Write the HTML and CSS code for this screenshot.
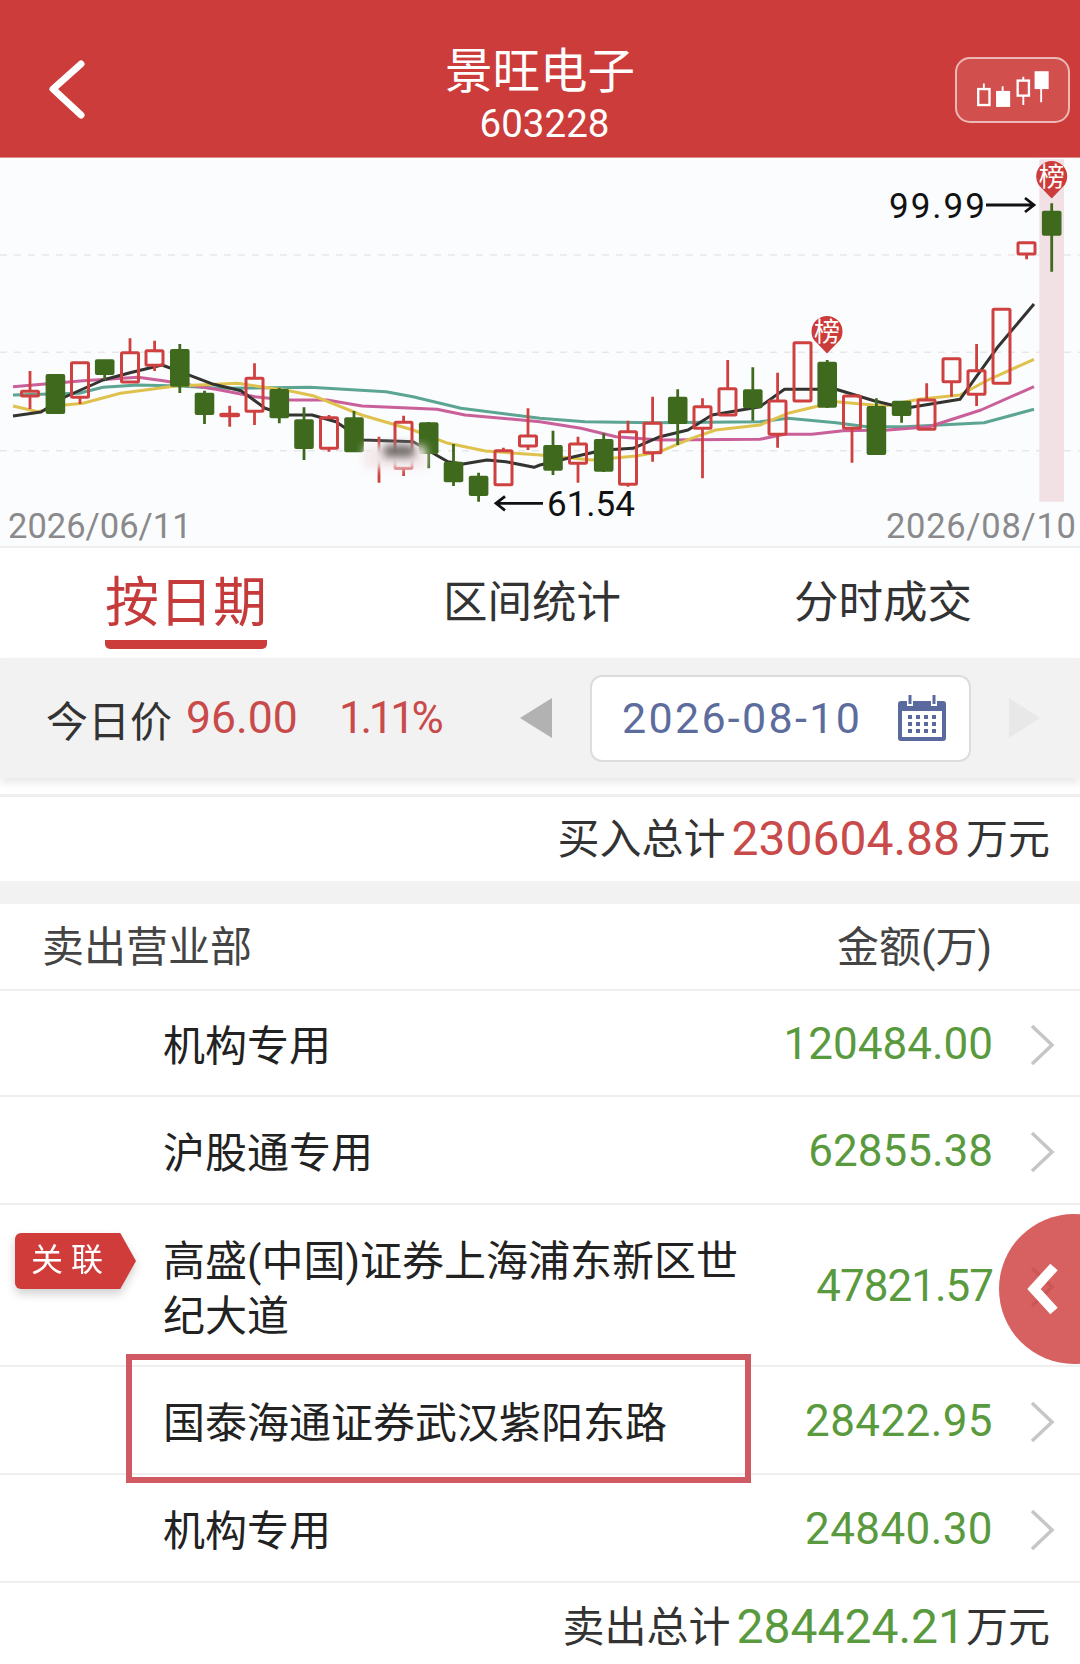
FILE: index.html
```html
<!DOCTYPE html>
<html lang="zh-CN">
<head>
    <meta charset="utf-8">
    <meta name="viewport" content="width=device-width, initial-scale=1.0">
    <title>景旺电子 603228</title>
    <link rel="stylesheet" href="styles.css">
</head>
<body>
    <div class="page">
        <header class="topbar">
            <svg class="back-icon" viewBox="0 0 40 60"><path d="M34 4 L6 29 L34 55"/></svg>
            <div class="title-block">
                <div class="title">景旺电子</div>
                <div class="code">603228</div>
            </div>
            <div class="kline-btn">
                <svg viewBox="0 0 115 66">
                    <path class="k-line" d="M27 26V31M47 29V34M69 19V23M69 39V49M88 32V46"/>
                    <rect class="k-open" x="21" y="32" width="12" height="17"/>
                    <rect class="k-fill" x="40" y="34" width="15" height="17"/>
                    <rect class="k-open" x="63" y="23" width="12" height="16"/>
                    <rect class="k-fill" x="81" y="13" width="15" height="19"/>
                </svg>
            </div>
        </header>

        <svg class="chart" viewBox="0 158 1080 388">
            <path class="grid" d="M0 255H1080M0 352.3H1080M0 450.7H1080"/>
            <rect class="today-band" x="1039.3" y="159.3" width="24.7" height="342.4"/>

            <polyline class="ma ma-teal" points="13,395 79,393.3 103,387.3 138,385 179,386 220,388.3 310,387.3 386,391.7 413,396.7 461,408.3 540,418.3 585,421.7 654,422.7 760,421.7 788,418.3 836,422.7 867,426.7 905,426.7 984,422.7 1034,409.3"/>
            <polyline class="ma ma-pink" points="13,386.7 83,380.7 138,377.3 165,381 220,390 255,396.7 286,400 327,400 362,406 437,409.3 465,415 540,421.7 581,428.3 616,436.7 660,440 760,439.3 784.5,434.3 812,434.3 843,430.7 888,430 929,426.7 981,410 1034,386.7"/>
            <polyline class="ma ma-yellow" points="13,406 38,411.7 65,405 83,403.3 120.5,393.3 175.6,386 237.6,383.3 289,390.7 313,395.7 361.6,415 413,430 448,443.3 485.5,451 540,455 592,460 636,456 660,451.7 691.5,438.3 715.6,430 760,425 788,413.3 836,401.7 884,406 919,399.3 960,395 988,380 1034,359.3"/>
            <polyline class="ma ma-black" points="13,416 41,412 65,397 103,380 130,372.7 162,365 180,371.7 213.5,384.3 241,390.7 265,408.3 286,415 312,415 336,421.7 363,440 413,441.7 448,461.7 463,464 487,460 506,461.7 534,467.3 540,465 574,456.7 604,450 633,448.3 660,436.7 688,430 712,415 760,406.7 784.5,389.3 836,389.3 874,400.7 905,408.3 960,399.3 998,346.7 1034,304"/>

            <!-- falling days -->
            <path class="wick-down" d="M104.7 375V380M179.8 344V393M204.5 390.7V424M279.3 388V423.3M304 407.3V460M354 411V452M428.7 422V468.3M453.5 444V486M478.6 472.7V501.7M553 430.7V475M603.7 433.3V472M677.7 389.3V445M752.8 367.3V420.7M827.2 360V408M876.4 398.3V455M901.6 416V422.7M1051.7 203.3V271.7"/>
            <g class="body-down">
                <rect x="45.6" y="374" width="19.6" height="40"/>
                <rect x="94.9" y="359.3" width="19.6" height="15.7"/>
                <rect x="170" y="349" width="19.6" height="37.7"/>
                <rect x="194.7" y="392.7" width="19.6" height="22.3"/>
                <rect x="269.5" y="389" width="19.6" height="29.3"/>
                <rect x="294.2" y="419.3" width="19.6" height="29.7"/>
                <rect x="344.2" y="417.3" width="19.6" height="35"/>
                <rect x="418.9" y="422.3" width="19.6" height="31.7"/>
                <rect x="443.7" y="461.7" width="19.6" height="20.6"/>
                <rect x="468.8" y="475.7" width="19.6" height="20.3"/>
                <rect x="543.2" y="445" width="19.6" height="25.7"/>
                <rect x="593.9" y="439" width="19.6" height="32.7"/>
                <rect x="667.9" y="396.7" width="19.6" height="27.3"/>
                <rect x="743" y="389.3" width="19.6" height="19"/>
                <rect x="817.4" y="361.7" width="19.6" height="46"/>
                <rect x="866.6" y="406" width="19.6" height="49"/>
                <rect x="891.8" y="400.7" width="19.6" height="15.3"/>
                <rect x="1041.9" y="210.7" width="19.6" height="25"/>
            </g>

            <!-- rising days -->
            <path class="wick-up" d="M30 371V391M30 396V409M80 397V404M130 338.3V353M154.6 340.7V351M154.6 365V371M229.7 405.7V426.7M254.5 363.3V378M254.5 411V425M329 415V418M329 448V451.7M379 436.7V482.7M403.6 415.7V422M403.6 468V476M503.4 447.7V451M528 408.3V436M528 446V450M578 436.7V444M578 463V482.7M628 420.7V432M628 484V486.7M652.6 396.7V423M652.6 453V461.7M702.5 398.3V407M702.5 428V478.3M727.7 360V389M777.6 372.7V401M777.6 434V447.7M852 428V462.7M926.7 383.3V400M951.5 381.7V396.7M976.6 344V371M976.6 394V406M1026.6 254V259.3"/>
            <g class="body-up">
                <rect x="21.5" y="391.3" width="17" height="4.7"/>
                <rect x="71.5" y="362.7" width="17" height="34.6"/>
                <rect x="121.5" y="352.7" width="17" height="29.3"/>
                <rect x="146" y="350.7" width="17" height="14.6"/>
                <rect x="220.7" y="414.3" width="18" height="1.4"/>
                <rect x="246" y="378.3" width="17" height="33"/>
                <rect x="320.5" y="417.7" width="17" height="30.6"/>
                <rect x="395" y="422.3" width="17" height="46"/>
                <rect x="495" y="450.7" width="17" height="34"/>
                <rect x="519.5" y="436" width="17" height="10"/>
                <rect x="569.5" y="444" width="17" height="19.3"/>
                <rect x="619.5" y="431.7" width="17" height="52.6"/>
                <rect x="644" y="423.3" width="17" height="29.4"/>
                <rect x="694" y="406.7" width="17" height="21.6"/>
                <rect x="719" y="388.7" width="17" height="26.3"/>
                <rect x="769" y="401" width="17" height="33.3"/>
                <rect x="794" y="342.7" width="17" height="58.3"/>
                <rect x="843.5" y="396" width="17" height="32.3"/>
                <rect x="918" y="400" width="17" height="29.3"/>
                <rect x="943" y="358.7" width="17" height="23"/>
                <rect x="968" y="370.7" width="17" height="23.6"/>
                <rect x="993" y="309.3" width="17" height="74"/>
                <rect x="1018" y="242.7" width="17" height="11.3"/>
            </g>

            <!-- smudge over the middle of the chart -->
            <rect class="smudge-light" x="364" y="446" width="62" height="22"/>
            <rect class="smudge-dark" x="384" y="445" width="30" height="12"/>

            <g class="pin">
                <path d="M827 353.5 L814 340 A15.5 15.5 0 1 1 840 340 Z"/>
                <text x="827" y="341">榜</text>
            </g>
            <g class="pin">
                <path d="M1051.7 198.5 L1038.7 185 A15.5 15.5 0 1 1 1064.7 185 Z"/>
                <text x="1051.7" y="186">榜</text>
            </g>

            <text class="peak peak-high" x="889" y="218">99.99</text>
            <path class="arrow" d="M986 205H1034M1025 198L1034 205L1025 212"/>
            <text class="peak" x="547" y="516">61.54</text>
            <path class="arrow" d="M543 503.3H496M505 496.3L496 503.3L505 510.3"/>
            <text class="axis-date" x="8" y="538">2026/06/11</text>
            <text class="axis-date axis-date-end" x="886" y="538">2026/08/10</text>
        </svg>

        <nav class="tabs">
            <div class="tab active"><span>按日期</span></div>
            <div class="tab"><span>区间统计</span></div>
            <div class="tab"><span>分时成交</span></div>
        </nav>

        <section class="toolbar">
            <span class="today-label">今日价</span>
            <span class="today-price">96.00</span>
            <span class="today-pct">1.11%</span>
            <span class="tri tri-left"></span>
            <div class="date-box">
                <span class="date-text">2026-08-10</span>
                <svg class="cal-icon" viewBox="0 0 48 46">
                    <path class="cal-body" d="M3 6H9V11H15V6H33V11H39V6H45A3 3 0 0 1 48 9V43A3 3 0 0 1 45 46H3A3 3 0 0 1 0 43V9A3 3 0 0 1 3 6Z"/>
                    <rect class="cal-body" x="10.5" y="0" width="3" height="9"/>
                    <rect class="cal-body" x="34.5" y="0" width="3" height="9"/>
                    <rect class="cal-page" x="4" y="16" width="40" height="26"/>
                    <path class="cal-dots" d="M12 20v4M20 20v4M28 20v4M36 20v4M12 27v4M20 27v4M28 27v4M36 27v4M12 34v4M20 34v4M28 34v4M36 34v4"/>
                </svg>
            </div>
            <span class="tri tri-right"></span>
        </section>

        <div class="total buy-total">买入总计<b class="up">230604.88</b>万元</div>
        <div class="gap"></div>

        <div class="list-head">
            <span>卖出营业部</span>
            <span>金额(万)</span>
        </div>

        <div class="row">
            <div class="name">机构专用</div>
            <div class="amount">120484.00</div>
            <svg class="chev" viewBox="0 0 26 42"><path d="M3 2L23 21L3 40"/></svg>
        </div>
        <div class="row row-b">
            <div class="name">沪股通专用</div>
            <div class="amount">62855.38</div>
            <svg class="chev" viewBox="0 0 26 42"><path d="M3 2L23 21L3 40"/></svg>
        </div>
        <div class="row row-tall">
            <div class="tag"><span>关 联</span></div>
            <div class="name">高盛(中国)证券上海浦东新区世纪大道</div>
            <div class="amount amount-tight">47821.57</div>
            <svg class="chev" viewBox="0 0 26 42"><path d="M3 2L23 21L3 40"/></svg>
            <div class="float-btn">
                <svg viewBox="0 0 40 56"><path d="M31 6L11 28L31 50"/></svg>
            </div>
        </div>
        <div class="row row-b">
            <div class="name">国泰海通证券武汉紫阳东路</div>
            <div class="amount amount-wide">28422.95</div>
            <svg class="chev" viewBox="0 0 26 42"><path d="M3 2L23 21L3 40"/></svg>
            <div class="mark-box"></div>
        </div>
        <div class="row row-b">
            <div class="name">机构专用</div>
            <div class="amount amount-wide">24840.30</div>
            <svg class="chev" viewBox="0 0 26 42"><path d="M3 2L23 21L3 40"/></svg>
        </div>

        <div class="total sell-total">卖出总计<b class="down">284424.21</b>万元</div>
    </div>
</body>
</html>
```

FILE: styles.css
```css
* {
    margin: 0;
    padding: 0;
    box-sizing: border-box;
}

html, body {
    width: 1080px;
    height: 1664px;
    overflow: hidden;
}

body {
    font-family: Roboto, "Noto Sans CJK SC", sans-serif;
    background: #fff;
    color: #333;
}

.page {
    width: 1080px;
    height: 1664px;
    overflow: hidden;
}

/* top bar */
.topbar {
    height: 158px;
    padding-top: 22px;
    background: #cb3c3a;
    display: grid;
    grid-template-columns: 1fr auto 1fr;
    align-items: center;
    color: #fff;
    border-bottom: 1px solid #e08c8a;
}

.back-icon {
    width: 40px;
    height: 60px;
    margin: 0 0 0 47px;
    fill: none;
    stroke: #fff;
    stroke-width: 7;
    stroke-linecap: round;
    stroke-linejoin: round;
}

.title-block {
    text-align: center;
    padding-top: 8px;
}

.title {
    font-size: 47.5px;
    line-height: 60px;
}

.code {
    font-size: 38.5px;
    line-height: 44px;
    padding-left: 9px;
}

.kline-btn {
    justify-self: end;
    width: 115px;
    height: 66px;
    margin-right: 10px;
    border: 2px solid #ecb8b6;
    border-radius: 15px;
    background: #d14f4d;
}

.kline-btn svg {
    display: block;
    width: 111px;
    height: 62px;
}

.k-line {
    fill: none;
    stroke: #fff;
    stroke-width: 2;
}

.k-open {
    fill: none;
    stroke: #fff;
    stroke-width: 2.5;
}

.k-fill {
    fill: #fff;
}

/* chart */
.chart {
    display: block;
    width: 1080px;
    height: 390px;
    background: #fbfcfe;
    border-bottom: 2px solid #efefef;
}

.grid {
    fill: none;
    stroke: #e6e7ea;
    stroke-width: 1.5;
    stroke-dasharray: 7 7;
}

.today-band {
    fill: #f1e0e4;
}

.ma {
    fill: none;
    stroke-width: 3;
    stroke-linejoin: round;
}

.ma-black { stroke: #33332f; }
.ma-yellow { stroke: #dfc24e; }
.ma-pink { stroke: #c9609a; }
.ma-teal { stroke: #5da593; }

.wick-down {
    fill: none;
    stroke: #3f6a1e;
    stroke-width: 2.8;
}

.body-down rect {
    fill: #3f6a1e;
    rx: 2px;
}

.wick-up {
    fill: none;
    stroke: #cf4040;
    stroke-width: 2.8;
}

.body-up rect {
    fill: none;
    stroke: #cf4040;
    stroke-width: 3;
    rx: 1px;
}

.smudge-light {
    fill: #f3e9ea;
    filter: blur(4px);
}

.smudge-dark {
    fill: #55504f;
    opacity: 0.85;
    filter: blur(4px);
}

.pin path {
    fill: #cb3c3a;
}

.pin text {
    fill: #fff;
    font-size: 26px;
    text-anchor: middle;
}

.peak {
    fill: #111;
    font-size: 35px;
}

.peak-high {
    letter-spacing: 2px;
}

.arrow {
    fill: none;
    stroke: #111;
    stroke-width: 2.8;
}

.axis-date {
    fill: #8a8a8c;
    font-size: 34.5px;
}

.axis-date-end {
    letter-spacing: 0.7px;
}

/* tabs */
.tabs {
    height: 110px;
    padding-left: 13px;
    display: grid;
    grid-template-columns: 346px 346px 356px;
}

.tab {
    display: flex;
    justify-content: center;
    font-size: 44.5px;
    line-height: 60px;
    padding-top: 25px;
    color: #333;
}

.tab.active {
    font-size: 54px;
    line-height: 60px;
    padding-top: 26px;
    color: #c53b3b;
}

.tab.active span {
    display: block;
    height: 75px;
    border-bottom: 9px solid #cb3c3a;
    border-radius: 0 0 5px 5px;
}

/* price and date */
.toolbar {
    height: 120px;
    padding-left: 46px;
    display: flex;
    align-items: center;
    background: #f2f2f2;
    box-shadow: 0 5px 8px rgba(0, 0, 0, 0.09);
}

.today-label {
    width: 140px;
    font-size: 42px;
    color: #333;
}

.today-price {
    width: 153px;
    font-size: 44.5px;
    color: #c94a4a;
}

.today-pct {
    width: 181px;
    font-size: 44px;
    letter-spacing: -3.3px;
    color: #c94a4a;
}

.tri {
    width: 0;
    height: 0;
    border-top: 20px solid transparent;
    border-bottom: 20px solid transparent;
}

.tri-left {
    border-right: 32px solid #b2b2b2;
}

.tri-right {
    margin-left: 38px;
    border-left: 31px solid #e8e8e8;
}

.date-box {
    width: 381px;
    height: 87px;
    margin-left: 38px;
    padding: 0 23px 0 30px;
    display: flex;
    align-items: center;
    justify-content: space-between;
    background: #fff;
    border: 2px solid #dcdcdc;
    border-radius: 12px;
}

.date-text {
    font-size: 43px;
    letter-spacing: 2.3px;
    color: #5c6c9c;
}

.cal-icon {
    width: 48px;
    height: 46px;
}

.cal-body {
    fill: #5a6a9e;
}

.cal-page {
    fill: #fff;
}

.cal-dots {
    fill: none;
    stroke: #5a6a9e;
    stroke-width: 4;
}

/* totals */
.total {
    padding-right: 30px;
    padding-bottom: 7px;
    display: flex;
    align-items: center;
    justify-content: flex-end;
    font-size: 42px;
    color: #333;
}

.total b {
    padding-top: 6px;
    font-size: 48px;
    font-weight: 400;
    margin: 0 6px;
}

.buy-total {
    height: 87px;
    margin-top: 16px;
    border-top: 3px solid #f0f0f0;
}

.sell-total {
    height: 87px;
}

.sell-total b {
    margin-right: 1px;
}

.up {
    color: #c94a4a;
}

.down {
    color: #5a9a3e;
}

.gap {
    height: 23px;
    background: #f2f2f2;
}

/* list */
.list-head {
    height: 87px;
    padding: 0 88px 6px 42px;
    display: flex;
    align-items: center;
    justify-content: space-between;
    font-size: 42px;
    color: #444;
    border-bottom: 2px solid #efefef;
}

.row {
    position: relative;
    height: 106px;
    padding-left: 163px;
    display: flex;
    align-items: center;
    border-bottom: 2px solid #efefef;
}

.row-b {
    height: 108px;
}

.row-tall {
    height: 162px;
}

.name {
    width: 590px;
    padding-top: 7px;
    font-size: 42px;
    line-height: 55px;
    color: #222;
}

.amount {
    width: 240px;
    padding-top: 2px;
    text-align: right;
    font-size: 44px;
    color: #5a9a3e;
}

.amount-tight {
    letter-spacing: -1px;
}

.amount-wide {
    letter-spacing: 0.4px;
}

.chev {
    width: 26px;
    height: 42px;
    margin: 4px 0 0 36px;
    flex-shrink: 0;
    fill: none;
    stroke: #c6c6c6;
    stroke-width: 3.5;
}

.tag {
    position: absolute;
    left: 15px;
    top: 28px;
    filter: drop-shadow(0 5px 5px rgba(0, 0, 0, 0.18));
}

.tag span {
    display: block;
    width: 121px;
    height: 56px;
    padding: 0 16px;
    line-height: 54px;
    font-size: 32px;
    color: #fff;
    white-space: nowrap;
    background: #cf3c3a;
    border-radius: 6px 0 0 6px;
    clip-path: polygon(0 0, 87% 0, 100% 50%, 87% 100%, 0 100%);
}

.float-btn {
    position: absolute;
    left: 999px;
    top: 9px;
    width: 150px;
    height: 150px;
    padding: 47px 0 0 24px;
    border-radius: 50%;
    background: rgba(205, 58, 58, 0.8);
}

.float-btn svg {
    display: block;
    width: 40px;
    height: 56px;
    fill: none;
    stroke: #fff;
    stroke-width: 10;
}

.mark-box {
    position: absolute;
    left: 126px;
    top: -13px;
    width: 625px;
    height: 129px;
    border: 6px solid #d05a64;
}
```
